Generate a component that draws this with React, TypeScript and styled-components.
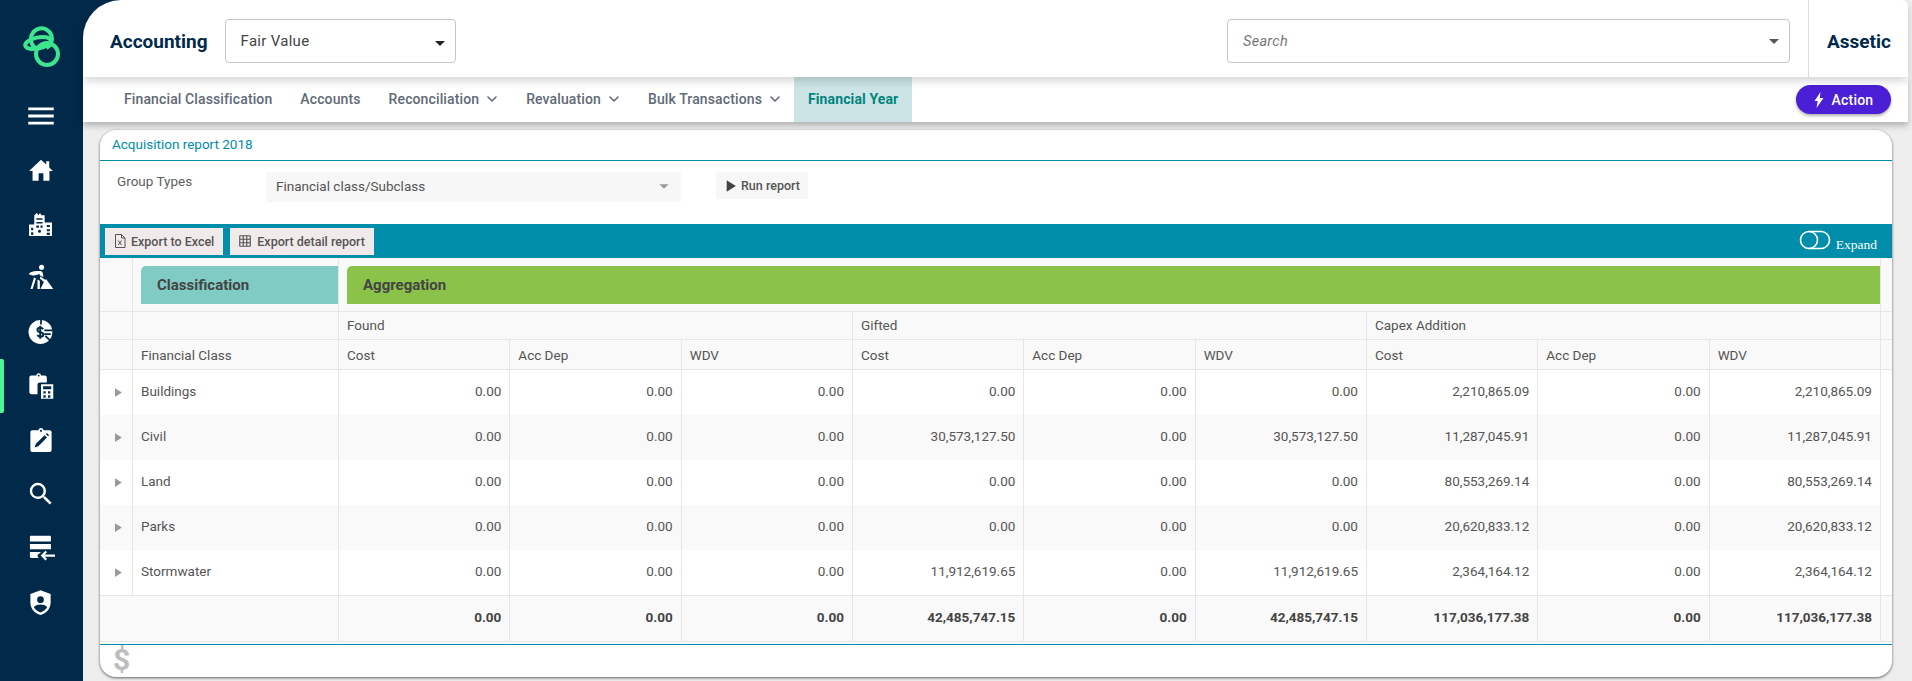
import React from 'react';
import styled, { createGlobalStyle, css } from 'styled-components';
import { MdMenu, MdSearch, MdArrowDropDown, MdPlayArrow, MdOutlineGridOn } from 'react-icons/md';
import { FiChevronDown } from 'react-icons/fi';

const NAVY = '#00294a';
const TEAL = '#008eaa';
const LINE = '#e6e6e6';

const GlobalStyle = createGlobalStyle`
  html, body { margin: 0; padding: 0; }
  body {
    background: #eeeeee;
    font-family: Roboto, "Noto Sans", sans-serif;
    color: #555;
    overflow: hidden;
  }
  * { box-sizing: border-box; }
`;

const Shell = styled.div`
  display: flex;
  width: 1912px;
  height: 681px;
  background: #eeeeee;
`;

const Sidebar = styled.aside`
  width: 83px;
  flex: none;
  background: ${NAVY};
  color: #fff;
  display: flex;
  flex-direction: column;
`;

const LogoSlot = styled.div`
  height: 89px;
  padding: 25px 0 0 23px;
`;

const SideItem = styled.div<{ $active?: boolean }>`
  position: relative;
  height: 54px;
  display: flex;
  align-items: center;
  justify-content: center;
  padding-right: 2px;
  ${(p) =>
    p.$active &&
    css`
      &::before {
        content: '';
        position: absolute;
        left: 0;
        top: 0;
        width: 4px;
        height: 54px;
        background: #4cf59a;
        border-radius: 0 2px 2px 0;
      }
    `}
`;

const Main = styled.div`
  flex: 1;
  min-width: 0;
  display: flex;
  flex-direction: column;
`;

const HeaderBack = styled.div`
  position: relative;
  z-index: 3;
  background: linear-gradient(90deg, ${NAVY} 50px, #eeeeee 50px);
`;

const Header = styled.header`
  height: 77px;
  margin-right: 4px;
  background: #fff;
  border-radius: 38px 6px 0 0;
  box-shadow: 0 4px 8px rgba(0, 0, 0, 0.16);
  display: flex;
  align-items: center;
  padding-left: 27px;
`;

const Title = styled.div`
  margin-top: 5px;
  font-size: 19px;
  font-weight: 700;
  color: ${NAVY};
`;

const HeaderSelect = styled.div<{ $width: number }>`
  width: ${(p) => p.$width}px;
  height: 44px;
  margin-top: 5px;
  border: 1px solid #c6c6c6;
  border-radius: 4px;
  display: flex;
  align-items: center;
  justify-content: space-between;
  padding: 0 3px 0 15px;
  font-size: 15px;
  color: #444;
  letter-spacing: 0.3px;
`;

const AccountingSelect = styled(HeaderSelect)`
  margin-left: 17px;
`;

const SearchSelect = styled(HeaderSelect)`
  margin-left: auto;
  font-size: 14.5px;
  font-style: italic;
  color: #777;
`;

const FairCaret = styled(MdArrowDropDown)`
  margin-top: 4px;
  color: #222;
`;

const Tenant = styled.div`
  align-self: stretch;
  margin-left: 18px;
  border-left: 1px solid #ddd;
  padding: 5px 0 0 18px;
  width: 100px;
  display: flex;
  align-items: center;
  font-size: 19px;
  font-weight: 700;
  color: ${NAVY};
`;

const NavBar = styled.nav`
  position: relative;
  z-index: 2;
  height: 45px;
  margin-right: 4px;
  background: #fff;
  box-shadow: 0 4px 6px rgba(0, 0, 0, 0.24);
  display: flex;
  align-items: stretch;
  padding-left: 27px;
`;

const NavTab = styled.div<{ $active?: boolean }>`
  display: flex;
  align-items: center;
  gap: 5px;
  padding: 0 14px 2px;
  font-size: 14px;
  font-weight: 500;
  letter-spacing: 0.12px;
  color: ${(p) => (p.$active ? '#00857f' : '#616a76')};
  ${(p) =>
    p.$active &&
    css`
      background: #cce4e5;
      font-weight: 700;
      margin-left: -1px;
    `}
`;

const Chevron = styled(FiChevronDown)`
  margin-right: -2px;
`;

const ActionButton = styled.button`
  margin: 8px 17px 0 auto;
  width: 95px;
  height: 29px;
  border: 0;
  border-radius: 15px;
  background: #4a1fd6;
  color: #fff;
  font-family: inherit;
  font-size: 14px;
  font-weight: 500;
  letter-spacing: 0.2px;
  display: flex;
  align-items: center;
  justify-content: center;
  gap: 8px;
  box-shadow: 0 2px 3px rgba(0, 0, 0, 0.3);
`;

const Content = styled.div`
  flex: 1;
  padding: 8px 20px 4px 17px;
`;

const Card = styled.section`
  position: relative;
  height: 547px;
  background: #fff;
  border-radius: 16px;
  box-shadow: 0 1px 3px rgba(0, 0, 0, 0.6);
  display: flex;
  flex-direction: column;
  overflow: hidden;
`;

const CardTitle = styled.div`
  height: 31px;
  flex: none;
  border-bottom: 1px solid ${TEAL};
  padding: 0 0 2px 12px;
  display: flex;
  align-items: center;
  font-size: 13.5px;
  color: ${TEAL};
`;

const FilterRow = styled.div`
  height: 63px;
  flex: none;
  padding: 11px 0 0 17px;
  display: flex;
  align-items: flex-start;
  box-shadow: 0 2px 3px rgba(0, 0, 0, 0.12);
`;

const FilterLabel = styled.div`
  width: 149px;
  font-size: 13.5px;
  line-height: 19px;
  color: #5e5e5e;
`;

const FilterSelect = styled.div`
  width: 415px;
  height: 30px;
  background: #f7f7f7;
  display: flex;
  align-items: center;
  justify-content: space-between;
  padding: 0 6px 2px 10px;
  font-size: 13.5px;
  color: #555;
`;

const RunButton = styled.div`
  margin-left: 35px;
  width: 92px;
  height: 27px;
  background: #f7f7f7;
  display: flex;
  align-items: center;
  gap: 1px;
  padding-left: 4px;
  font-size: 12.5px;
  font-weight: 500;
  color: #555;
`;

const Toolbar = styled.div`
  height: 34px;
  flex: none;
  background: ${TEAL};
  display: flex;
  align-items: center;
  padding: 0 15px 0 5px;
  gap: 7px;
`;

const ToolButton = styled.div<{ $gap: number }>`
  height: 27px;
  background: #f0eaea;
  display: flex;
  align-items: center;
  gap: ${(p) => p.$gap}px;
  padding: 0 9px 0 8px;
  font-size: 12.5px;
  font-weight: 500;
  color: #555;
`;

const ExpandToggle = styled.div`
  margin-left: auto;
  display: flex;
  align-items: flex-start;
  gap: 5px;
  font-family: 'Liberation Serif', serif;
  font-size: 13.5px;
  color: #fff;
`;

const ExpandLabel = styled.span`
  padding-top: 7px;
`;

const columns = css`
  display: grid;
  grid-template-columns: 33px 206px repeat(9, 171.33px) 1fr;
`;

const HeadRow = styled.div<{ $height: number }>`
  ${columns}
  height: ${(p) => p.$height}px;
  background: #f9f9f9;
  border-bottom: 1px solid ${LINE};
`;

const HeadCell = styled.div<{ $span?: number }>`
  grid-column: span ${(p) => p.$span ?? 1};
  border-right: 1px solid ${LINE};
  padding-left: 8px;
  display: flex;
  align-items: center;
  font-size: 13.5px;
  color: #555;
`;

const GroupCell = styled(HeadCell)`
  padding-bottom: 1px;
`;

const BandCell = styled.div<{ $span?: number }>`
  grid-column: span ${(p) => p.$span ?? 1};
  padding: 8px 0 7px 8px;
  border-right: 1px solid ${LINE};
  display: flex;
`;

const Band = styled.div<{ $color: string }>`
  flex: 1;
  background: ${(p) => p.$color};
  border-radius: 5px 0 0 0;
  padding-left: 16px;
  display: flex;
  align-items: center;
  font-size: 15px;
  font-weight: 700;
  color: #444;
`;

const BodyRow = styled.div<{ $alt: boolean }>`
  ${columns}
  height: 45px;
  background: linear-gradient(90deg, ${(p) => (p.$alt ? '#f9f9f9' : '#fff')} calc(100% - 11px), #fff 0);
`;

const ExpandCell = styled.div`
  border-right: 1px solid ${LINE};
  padding-left: 2px;
  display: flex;
  align-items: center;
  justify-content: center;
  color: #9a9a9a;
`;

const NameCell = styled.div`
  border-right: 1px solid ${LINE};
  padding: 0 0 3px 8px;
  display: flex;
  align-items: center;
  font-size: 13.5px;
  color: #555;
`;

const NumberCell = styled.div`
  border-right: 1px solid ${LINE};
  padding: 0 8px 3px 0;
  display: flex;
  align-items: center;
  justify-content: flex-end;
  font-size: 13.5px;
  color: #555;
`;

const FootRow = styled.div`
  ${columns}
  height: 47px;
  background: #f9f9f9;
  border-top: 1px solid ${LINE};
  border-bottom: 1px solid ${LINE};
`;

const FootLabel = styled.div`
  grid-column: span 2;
  border-right: 1px solid ${LINE};
`;

const FootCell = styled(NumberCell)`
  font-weight: 700;
  color: #444;
`;

const CardFooter = styled.div`
  margin-top: 2px;
  flex: 1;
  border-top: 1px solid ${TEAL};
  padding-left: 13px;
  font-size: 30px;
  line-height: 29px;
  font-weight: 700;
  color: #bdbdbd;
`;

type IconProps = { size?: number };

const Logo = () => (
  <svg width="38" height="44" viewBox="0 0 38 44" fill="none" stroke="#3de58f" strokeWidth="4">
    <path d="M8 14a10.500 10.500 0 1 1 15.500 9" />
    <path d="M8 14c0 6 3 9 7 10" />
    <circle cx="24" cy="29" r="11" />
    <ellipse cx="15" cy="18" rx="13" ry="5.500" transform="rotate(-12 15 18)" />
  </svg>
);

const HomeIcon = ({ size = 26 }: IconProps) => (
  <svg width={size} height={size} viewBox="0 0 24 24" fill="#fff">
    <path d="M12 2.500 1 13h3.200v9h5.600v-7h4.400v7h5.600v-9H23l-3.400-3.300V4h-2.800v3Z" />
  </svg>
);

const BuildingIcon = ({ size = 25 }: IconProps) => (
  <svg width={size} height={size} viewBox="0 0 24 24" fill="#fff" fillRule="evenodd">
    <path d="M1 23V12h5V3l2.500-2 1.500 2 1.500-2 1.500 2H16v7h7v13ZM3 15h2v2.500H3ZM3 19.500h2V22H3ZM18 12.500h3v2h-3ZM18 16.500h3v2h-3ZM18 20h3v2h-3ZM8 6h6v1.500H8ZM8 9.500h6V11H8ZM8 13h2.500v2H8ZM12 13h2v2h-2ZM9.500 18.500a1.500 1.500 0 1 0 3 0 1.500 1.500 0 0 0-3 0Z" />
  </svg>
);

const WorkerIcon = ({ size = 28 }: IconProps) => (
  <svg width={size} height={size} viewBox="0 0 24 24" fill="#fff">
    <circle cx="12.500" cy="2.800" r="2.200" />
    <path d="M1.500 8.500C3 6.700 5.500 6 8 6h3.200c1.200 0 2 .7 2.300 1.800l.6 3.400-2.600-1.200-1-1.500C8 9.800 4.500 10.500 1.500 8.500Z" />
    <path d="M6 11.500 3 21.500h1.800L7.700 12.500ZM9 13.200v8.300h2v-7.200ZM11.500 10.800l4 2.700 1-.5 6 8.500H11.500l3-6-3.500-3Z" />
  </svg>
);

const DollarIcon = ({ size = 26 }: IconProps) => (
  <svg width={size} height={size} viewBox="0 0 24 24">
    <circle cx="11.500" cy="12" r="11" fill="#fff" />
    <path fill="none" stroke={NAVY} strokeWidth="1.600" d="M12 1v4M15 10.500h9M15 14h6M16 15.500l5 5" />
    <path fill="none" stroke={NAVY} strokeWidth="1.800" d="M14 9.500c-.6-1-1.500-1.400-2.700-1.400-1.500 0-2.600.9-2.600 2.100 0 2.800 5.400 1.300 5.400 4 0 1.300-1.100 2.100-2.700 2.100-1.200 0-2.200-.5-2.800-1.500M11.300 6.300v12" />
  </svg>
);

const CalcClipIcon = ({ size = 28 }: IconProps) => (
  <svg width={size} height={size} viewBox="0 0 24 24" fill="#fff" fillRule="evenodd">
    <path d="M10 1a2 2 0 0 1 2 2h3.200c1 0 1.800.8 1.800 1.800V9h-6a2 2 0 0 0-2 2v8H3.800C2.800 19 2 18.200 2 17.200V4.800C2 3.800 2.800 3 3.800 3H8a2 2 0 0 1 2-2Zm0 1.300a.8.8 0 1 0 0 1.600.8.800 0 0 0 0-1.600Z" />
    <path d="M12 10.500h10.500V23H12ZM13.800 12.200v2.500h7v-2.500ZM14 16.500v2h2v-2Zm4 0v2h2v-2Zm-4 3.500v2h2v-2Zm4 0v2h2v-2Z" />
  </svg>
);

const ClipEditIcon = ({ size = 26 }: IconProps) => (
  <svg width={size} height={size} viewBox="0 0 24 24" fill="#fff" fillRule="evenodd">
    <path d="M12 1a2.500 2.500 0 0 1 2.400 2H20c1 0 1.800.8 1.800 1.800v16.400c0 1-.8 1.800-1.800 1.800H4c-1 0-1.800-.8-1.800-1.800V4.800C2.200 3.800 3 3 4 3h5.600A2.500 2.500 0 0 1 12 1Zm0 1.500a1 1 0 1 0 0 2 1 1 0 0 0 0-2ZM15.300 7.500l-8 8L6 19l3.500-1.300 8-8Zm1.200-1 2 2 1-1-2-2Z" />
  </svg>
);

const ServerIcon = ({ size = 28 }: IconProps) => (
  <svg width={size} height={size} viewBox="0 0 24 24" fill="#fff">
    <path d="M3.500 1.500h16c.6 0 1 .4 1 1v4h-18v-4c0-.6.4-1 1-1ZM2.500 8.500h18V13h-18ZM2.500 15.500h9.500l-3.200 3 1.200 2H3.500c-.6 0-1-.4-1-1Z" />
    <path fill="none" stroke="#fff" strokeWidth="1.800" d="M24 18.500H13M16.500 15l-3.500 3.500 3.500 3.500" />
  </svg>
);

const ShieldIcon = ({ size = 27 }: IconProps) => (
  <svg width={size} height={size} viewBox="0 0 24 24" fill="#fff" fillRule="evenodd">
    <path d="M12 1 3 4.500V12c0 5.500 3.800 9.700 9 11 5.200-1.300 9-5.500 9-11V4.500ZM12 6.500a3 3 0 1 1 0 6 3 3 0 0 1 0-6ZM6 16c1.500-1.500 3.800-2.200 6-2.200s4.500.7 6 2.200c-1.200 2.200-3.300 3.900-6 4.800-2.700-.9-4.800-2.600-6-4.800Z" />
  </svg>
);

const ExcelIcon = () => (
  <svg width="14" height="14" viewBox="0 0 14 14" fill="none" stroke="#555" strokeWidth="1">
    <path d="M2.500.5h6l3.500 3.500v9.500H2.500ZM8.500.5V4H12M5.200 6.500l3.300 4.500M8.500 6.500l-3.300 4.500" />
  </svg>
);

const ToggleIcon = () => (
  <svg width="32" height="21" viewBox="0 0 32 21" fill="none" stroke="#fff" strokeWidth="1.600">
    <path d="M10 1.500h12a8.500 8.500 0 0 1 0 17H10" />
    <circle cx="10" cy="10" r="8.500" />
  </svg>
);

const BoltIcon = () => (
  <svg width="10" height="16" viewBox="0 0 10 16" fill="#fff">
    <path d="M6.500 0 .5 9h3.200L2.500 16 9.500 6H5.800Z" />
  </svg>
);

const NAV_ITEMS = [
  { label: 'Financial Classification' },
  { label: 'Accounts' },
  { label: 'Reconciliation', menu: true },
  { label: 'Revaluation', menu: true },
  { label: 'Bulk Transactions', menu: true },
  { label: 'Financial Year', active: true }
];

const GROUPS = ['Found', 'Gifted', 'Capex Addition'];
const SUB_HEADERS = ['Cost', 'Acc Dep', 'WDV'];

const ROWS = [
  { name: 'Buildings', gifted: '0.00', capex: '2,210,865.09' },
  { name: 'Civil', gifted: '30,573,127.50', capex: '11,287,045.91' },
  { name: 'Land', gifted: '0.00', capex: '80,553,269.14' },
  { name: 'Parks', gifted: '0.00', capex: '20,620,833.12' },
  { name: 'Stormwater', gifted: '11,912,619.65', capex: '2,364,164.12' }
];

const rowValues = (gifted: string, capex: string) => [
  '0.00', '0.00', '0.00',
  gifted, '0.00', gifted,
  capex, '0.00', capex
];

export default function App() {
  return (
    <Shell>
      <GlobalStyle />
      <Sidebar>
        <LogoSlot>
          <Logo />
        </LogoSlot>
        <SideItem><MdMenu size={34} /></SideItem>
        <SideItem><HomeIcon /></SideItem>
        <SideItem><BuildingIcon /></SideItem>
        <SideItem><WorkerIcon /></SideItem>
        <SideItem><DollarIcon /></SideItem>
        <SideItem $active><CalcClipIcon /></SideItem>
        <SideItem><ClipEditIcon /></SideItem>
        <SideItem><MdSearch size={30} /></SideItem>
        <SideItem><ServerIcon /></SideItem>
        <SideItem><ShieldIcon /></SideItem>
      </Sidebar>
      <Main>
        <HeaderBack>
          <Header>
            <Title>Accounting</Title>
            <AccountingSelect $width={231}>
              Fair Value
              <FairCaret size={24} />
            </AccountingSelect>
            <SearchSelect $width={563}>
              Search
              <MdArrowDropDown size={24} color="#555" />
            </SearchSelect>
            <Tenant>Assetic</Tenant>
          </Header>
        </HeaderBack>
        <NavBar>
          {NAV_ITEMS.map((item) => (
            <NavTab key={item.label} $active={item.active}>
              {item.label}
              {item.menu && <Chevron size={16} strokeWidth={2.4} />}
            </NavTab>
          ))}
          <ActionButton>
            <BoltIcon />
            Action
          </ActionButton>
        </NavBar>
        <Content>
          <Card>
            <CardTitle>Acquisition report 2018</CardTitle>
            <FilterRow>
              <FilterLabel>Group Types</FilterLabel>
              <FilterSelect>
                Financial class/Subclass
                <MdArrowDropDown size={22} color="#999" />
              </FilterSelect>
              <RunButton>
                <MdPlayArrow size={20} color="#444" />
                Run report
              </RunButton>
            </FilterRow>
            <Toolbar>
              <ToolButton $gap={4}><ExcelIcon />Export to Excel</ToolButton>
              <ToolButton $gap={5}><MdOutlineGridOn size={14} />Export detail report</ToolButton>
              <ExpandToggle>
                <ToggleIcon />
                <ExpandLabel>Expand</ExpandLabel>
              </ExpandToggle>
            </Toolbar>

            <HeadRow $height={54}>
              <HeadCell />
              <BandCell><Band $color="#80cbc4">Classification</Band></BandCell>
              <BandCell $span={9}><Band $color="#8bc34a">Aggregation</Band></BandCell>
              <div />
            </HeadRow>
            <HeadRow $height={28}>
              <HeadCell />
              <HeadCell />
              {GROUPS.map((group) => (
                <GroupCell key={group} $span={3}>{group}</GroupCell>
              ))}
              <div />
            </HeadRow>
            <HeadRow $height={30}>
              <HeadCell />
              <HeadCell>Financial Class</HeadCell>
              {GROUPS.flatMap((group) =>
                SUB_HEADERS.map((sub) => <HeadCell key={group + sub}>{sub}</HeadCell>)
              )}
              <div />
            </HeadRow>

            {ROWS.map((row, index) => (
              <BodyRow key={row.name} $alt={index % 2 === 1}>
                <ExpandCell><MdPlayArrow size={15} /></ExpandCell>
                <NameCell>{row.name}</NameCell>
                {rowValues(row.gifted, row.capex).map((value, i) => (
                  <NumberCell key={i}>{value}</NumberCell>
                ))}
              </BodyRow>
            ))}
            <FootRow>
              <FootLabel />
              {rowValues('42,485,747.15', '117,036,177.38').map((value, i) => (
                <FootCell key={i}>{value}</FootCell>
              ))}
            </FootRow>
            <CardFooter>$</CardFooter>
          </Card>
        </Content>
      </Main>
    </Shell>
  );
}
